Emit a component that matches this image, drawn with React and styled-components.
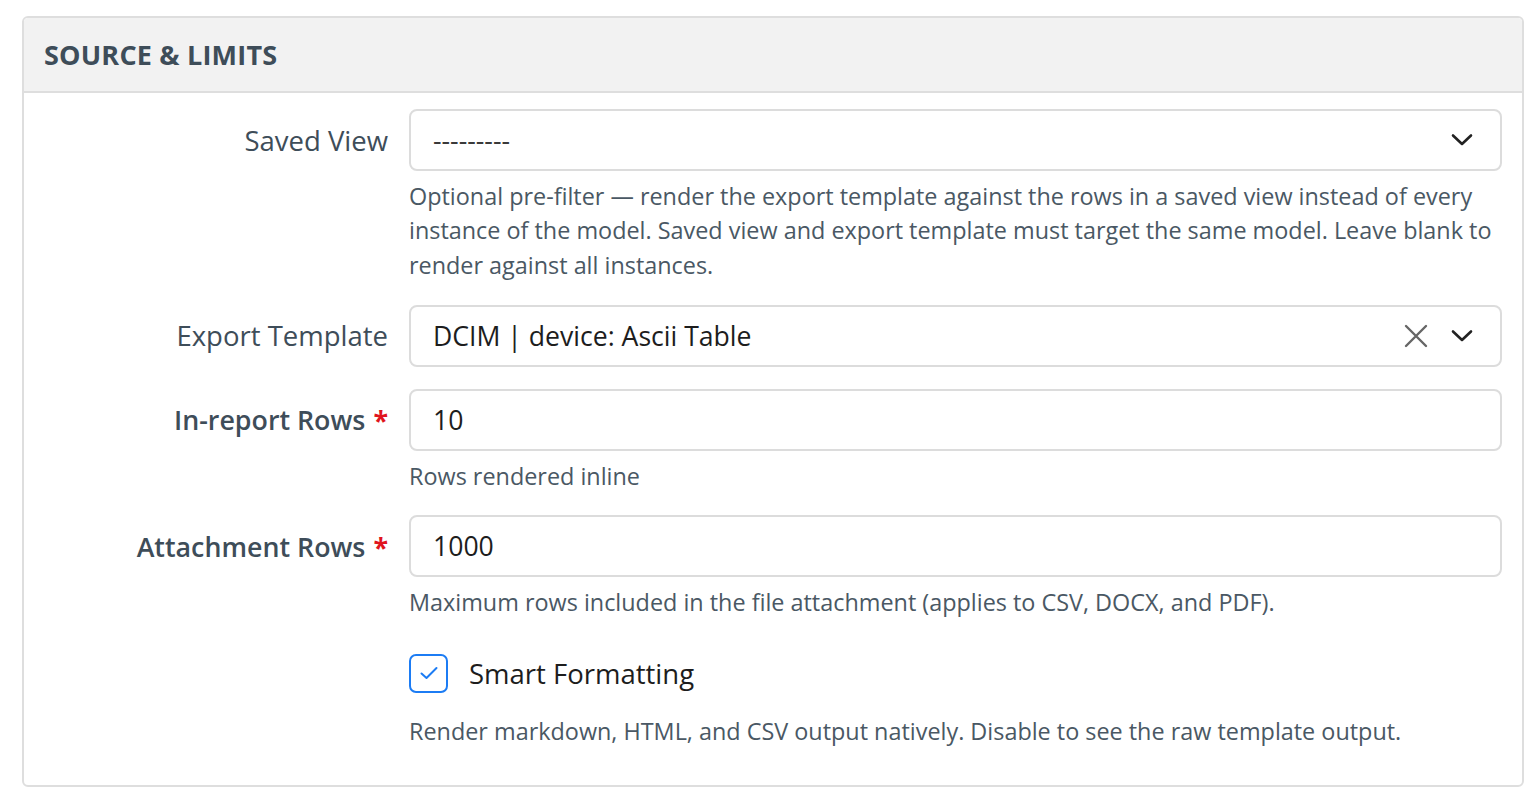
import React from "react";
import styled, { createGlobalStyle } from "styled-components";

const Global = createGlobalStyle`
  html, body {
    margin: 0;
    padding: 0;
    background: #ffffff;
    font-family: "Open Sans", "Noto Sans", sans-serif;
  }
`;

const Page = styled.div`
  padding: 16px 15px 15px 22px;
`;

const Panel = styled.section`
  width: 1502px;
  box-sizing: border-box;
  border: 2px solid #dedede;
  border-radius: 6px;
  overflow: hidden;
`;

const PanelHeader = styled.header`
  height: 75px;
  box-sizing: border-box;
  background: #f2f2f2;
  border-bottom: 2px solid #dedede;
  display: flex;
  align-items: center;
  padding-left: 20px;
`;

const Title = styled.h2`
  margin: 0;
  font-size: 27px;
  font-weight: 700;
  color: #3e4d59;
  letter-spacing: 0.2px;
`;

const Body = styled.div`
  padding: 16px 20px 36px 0;
  display: flex;
  flex-direction: column;
`;

const Row = styled.div`
  display: grid;
  grid-template-columns: 385px 1fr;
  margin-bottom: ${(p) => p.gap || 0}px;
`;

const Label = styled.label`
  height: 62px;
  display: flex;
  align-items: center;
  justify-content: flex-end;
  padding-right: 21px;
  font-size: ${(p) => (p.required ? 26.8 : 27.5)}px;
  font-weight: ${(p) => (p.required ? 600 : 400)};
  color: #3e4d59;
  white-space: nowrap;
`;

const Star = styled.span`
  color: #e0141e;
  margin-left: 8px;
  font-weight: 700;
`;

const Field = styled.div`
  display: flex;
  flex-direction: column;
`;

const Control = styled.div`
  height: 62px;
  box-sizing: border-box;
  border: 2px solid #dcdcdc;
  border-radius: 8px;
  display: flex;
  align-items: center;
  padding: 0 27px 0 22px;
  font-size: 26.6px;
  color: ${(p) => (p.muted ? "#3a3a3a" : "#1d1d1d")};
`;

const Value = styled.span`
  flex: 1;
`;

const Icons = styled.span`
  display: flex;
  align-items: center;
  gap: 23px;
`;

const Help = styled.p`
  margin: ${(p) => p.top || 8}px 0 0;
  font-size: 23.4px;
  line-height: 34.3px;
  color: #4a5864;
`;

const CheckRow = styled.div`
  display: flex;
  align-items: center;
  gap: 21px;
  height: 40px;
  margin-top: 12px;
`;

const Box = styled.span`
  width: 39px;
  height: 39px;
  box-sizing: border-box;
  border: 2px solid #1c7cf4;
  border-radius: 7px;
  display: flex;
  align-items: center;
  justify-content: center;
`;

const CheckText = styled.span`
  font-size: 27.5px;
  color: #1d1d1d;
`;

const Chevron = () => (
  <svg width="22" height="14" viewBox="0 0 22 14" fill="none">
    <path d="M2 2.5 L11 11 L20 2.5" stroke="#222" strokeWidth="2.6" strokeLinecap="round" strokeLinejoin="round" />
  </svg>
);

const Cross = () => (
  <svg width="24" height="24" viewBox="0 0 24 24" fill="none">
    <path d="M2 2 L22 22 M22 2 L2 22" stroke="#666" strokeWidth="2.4" strokeLinecap="round" />
  </svg>
);

const Tick = () => (
  <svg width="20" height="16" viewBox="0 0 20 16" fill="none">
    <path d="M2.5 8.5 L7.5 13 L17.5 3" stroke="#1c7cf4" strokeWidth="2" strokeLinecap="round" strokeLinejoin="round" />
  </svg>
);

export default function App() {
  return (
    <>
      <Global />
      <Page>
        <Panel>
          <PanelHeader>
            <Title>SOURCE &amp; LIMITS</Title>
          </PanelHeader>
          <Body>
            <Row gap={23}>
              <Label>Saved View</Label>
              <Field>
                <Control muted>
                  <Value>---------</Value>
                  <Icons>
                    <Chevron />
                  </Icons>
                </Control>
                <Help>
                  Optional pre-filter — render the export template against the rows in a saved view instead of every
                  instance of the model. Saved view and export template must target the same model. Leave blank to
                  render against all instances.
                </Help>
              </Field>
            </Row>
            <Row gap={22}>
              <Label>Export Template</Label>
              <Field>
                <Control>
                  <Value>DCIM | device: Ascii Table</Value>
                  <Icons>
                    <Cross />
                    <Chevron />
                  </Icons>
                </Control>
              </Field>
            </Row>
            <Row gap={22}>
              <Label required>
                In-report Rows<Star>*</Star>
              </Label>
              <Field>
                <Control>
                  <Value>10</Value>
                </Control>
                <Help>Rows rendered inline</Help>
              </Field>
            </Row>
            <Row gap={22}>
              <Label required>
                Attachment Rows<Star>*</Star>
              </Label>
              <Field>
                <Control>
                  <Value>1000</Value>
                </Control>
                <Help>Maximum rows included in the file attachment (applies to CSV, DOCX, and PDF).</Help>
              </Field>
            </Row>
            <Row>
              <div />
              <Field>
                <CheckRow>
                  <Box>
                    <Tick />
                  </Box>
                  <CheckText>Smart Formatting</CheckText>
                </CheckRow>
                <Help top={21}>Render markdown, HTML, and CSV output natively. Disable to see the raw template output.</Help>
              </Field>
            </Row>
          </Body>
        </Panel>
      </Page>
    </>
  );
}
